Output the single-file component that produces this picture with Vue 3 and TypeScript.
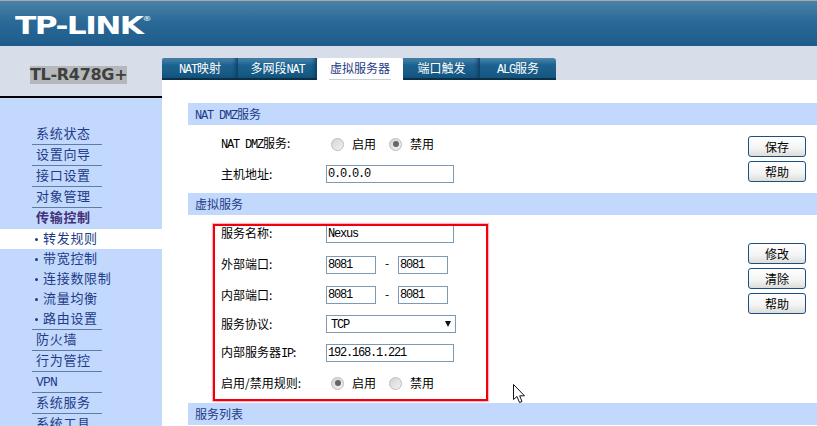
<script setup lang="ts">
const menuTop = ['系统状态', '设置向导', '接口设置', '对象管理']
const subs = ['转发规则', '带宽控制', '连接数限制', '流量均衡', '路由设置']
const menuBottom = ['防火墙', '行为管控', 'VPN', '系统服务', '系统工具']
const tabs = [
  { cjk: '映射', pre: 'NAT', post: '', w: 76 },
  { cjk: '多网段', pre: '', post: 'NAT', w: 79 },
  { cjk: '虚拟服务器', pre: '', post: '', w: 86, active: true },
  { cjk: '端口触发', pre: '', post: '', w: 77 },
  { cjk: '服务', pre: 'ALG', post: '', w: 76 },
]
</script>

<template>
  <div class="page">
    <header class="top">
      <div class="logo"><span class="logo-text">TP-LINK<span class="reg">®</span></span></div>
    </header>
    <div class="body">
      <aside class="side">
        <div class="model"><span class="model-name">TL-R478G+</span></div>
        <nav class="nav">
          <div v-for="m in menuTop" :key="m" class="item">{{ m }}</div>
          <div class="item group">传输控制</div>
          <div v-for="(s, i) in subs" :key="s" class="sub" :class="{ on: i === 0 }">
            <i class="dot"></i><span class="sub-text">{{ s }}</span>
          </div>
          <div v-for="m in menuBottom" :key="m" class="item">
            <span :class="{ latn: m === 'VPN' }">{{ m }}</span>
          </div>
        </nav>
      </aside>
      <main class="main">
        <div class="tabbar">
          <div
            v-for="t in tabs"
            :key="t.cjk"
            class="tab"
            :class="{ active: t.active }"
            :style="{ width: t.w + 'px' }"
          >
            <span class="inner"><span class="lat">{{ t.pre }}</span>{{ t.cjk }}<span class="lat">{{ t.post }}</span></span>
          </div>
        </div>
        <div class="content">
          <h2 class="bar"><span class="lat">NAT DMZ</span>服务</h2>
          <section class="sec sec1">
            <div class="form form1">
              <label class="lab"><span class="lat">NAT DMZ</span>服务:</label>
              <div class="ctl">
                <span class="radio"></span><span class="rt">启用</span>
                <span class="radio checked"></span><span class="rt">禁用</span>
              </div>
              <label class="lab">主机地址:</label>
              <div class="ctl"><input class="inp wide" value="0.0.0.0" /></div>
            </div>
            <div class="btns">
              <button class="btn">保存</button>
              <button class="btn">帮助</button>
            </div>
          </section>
          <h2 class="bar">虚拟服务</h2>
          <section class="sec sec2">
            <div class="form form2">
              <label class="lab">服务名称:</label>
              <div class="ctl"><input class="inp wide" value="Nexus" /></div>
              <label class="lab">外部端口:</label>
              <div class="ctl">
                <input class="inp port" value="8081" /><span class="dash">-</span><input class="inp port" value="8081" />
              </div>
              <label class="lab">内部端口:</label>
              <div class="ctl">
                <input class="inp port" value="8081" /><span class="dash">-</span><input class="inp port" value="8081" />
              </div>
              <label class="lab">服务协议:</label>
              <div class="ctl">
                <div class="select"><span class="lat">TCP</span><i class="arrow"></i></div>
              </div>
              <label class="lab">内部服务器<span class="lat">IP</span>:</label>
              <div class="ctl"><input class="inp wide" value="192.168.1.221" /></div>
              <label class="lab">启用/禁用规则:</label>
              <div class="ctl">
                <span class="radio checked"></span><span class="rt">启用</span>
                <span class="radio"></span><span class="rt">禁用</span>
              </div>
            </div>
            <div class="btns">
              <button class="btn">修改</button>
              <button class="btn">清除</button>
              <button class="btn">帮助</button>
            </div>
            <div class="redbox"></div>
            <svg class="cursor" width="14" height="20" viewBox="0 0 14 20">
              <path
                d="M1.5 0.5V15.5L5 12.5L7.5 18.5L10 17.5L7.7 11.8H12.5Z"
                fill="#fff"
                stroke="#10131c"
                stroke-width="1"
              />
            </svg>
          </section>
          <h2 class="bar">服务列表</h2>
        </div>
      </main>
    </div>
  </div>
</template>

<style>
html,
body {
  margin: 0;
  overflow: hidden;
  background: #fff;
}
</style>

<style scoped>
.page {
  width: 817px;
  height: 426px;
  overflow: hidden;
  font-family: "Noto Sans CJK SC", "Liberation Sans", sans-serif;
  font-size: 12px;
  color: #000;
}
.lat {
  font-family: "Liberation Mono", monospace;
  font-size: 12px;
  letter-spacing: -1.2px;
}
.top {
  height: 45px;
  border-top: 1px solid #a9a9a9;
  background: linear-gradient(#4a82a8, #2a6a98 45%, #1e5b8a);
}
.logo {
  padding: 10px 0 0 15px;
  line-height: 30px;
}
.logo-text {
  display: inline-block;
  transform: scaleX(1.3);
  transform-origin: left center;
  font-family: "DejaVu Sans", sans-serif;
  font-weight: 700;
  font-size: 24px;
  letter-spacing: -1.2px;
  color: #fff;
  white-space: nowrap;
  position: relative;
}
.reg {
  position: absolute;
  left: 100%;
  top: 0;
  font-size: 7px;
  line-height: 16px;
  letter-spacing: 0;
  color: #d5e2ec;
}
.body {
  display: flex;
  height: 380px;
}
.side {
  width: 162px;
  flex: none;
  background: #c3d8fd;
}
.model {
  height: 50px;
  border-bottom: 2px solid #000;
  background: #d7dee9;
  display: flex;
  align-items: center;
  padding-left: 30px;
}
.model-name {
  display: block;
  background: #b5b8bb;
  color: #3f3f3f;
  font-family: "DejaVu Sans", sans-serif;
  font-weight: 700;
  font-size: 16px;
  line-height: 18px;
  width: 97px;
  text-align: center;
  white-space: nowrap;
  letter-spacing: -0.3px;
  margin-top: 8px;
}
.nav {
  padding-top: 25px;
  color: #1d3b86;
  font-size: 13px;
  letter-spacing: 0.7px;
}
.item {
  width: 66px;
  height: 20px;
  line-height: 18px;
  margin-left: 32px;
  padding-left: 4px;
  border-top: 1px solid #5e7fa3;
  white-space: nowrap;
}
.item:first-child {
  border-top-color: transparent;
}
.group {
  height: 21px;
  font-weight: 700;
  color: #43307a;
}
.latn {
  font-family: "Liberation Mono", monospace;
  font-size: 13px;
  letter-spacing: -0.8px;
}
.sub {
  height: 20px;
  display: flex;
  align-items: center;
  padding-left: 35px;
  white-space: nowrap;
}
.sub-text {
  line-height: 16px;
  margin-bottom: 3px;
}
.sub.on {
  background: #fff;
}
.dot {
  width: 3px;
  height: 3px;
  border-radius: 50%;
  background: #1d3b86;
  margin: 0 5px 0 0;
}
.main {
  flex: 1;
  min-width: 0;
}
.tabbar {
  height: 34px;
  box-sizing: border-box;
  padding-top: 12px;
  background: #d7dee9;
  display: flex;
}
.tab {
  height: 22px;
  box-sizing: border-box;
  background: linear-gradient(#4c87ad, #1d6390 35%, #145580);
  border-bottom: 2px solid #0a3048;
  box-shadow: inset -4px 0 4px -2px #0f3b5c;
  color: #fff;
  text-align: center;
  line-height: 19px;
  white-space: nowrap;
}
.tab:nth-child(5) {
  box-shadow: none;
  border-top-right-radius: 3px;
}
.tab:first-child {
  border-top-left-radius: 2px;
}
.tab.active {
  background: #fff;
  border-bottom: 0;
  box-shadow: none;
  color: #1d3b86;
  border-radius: 3px 3px 0 0;
}
.tab .inner {
  display: inline-block;
  height: 21px;
  box-sizing: border-box;
}
.tab.active .inner {
  border-bottom: 1px solid #c2cfd3;
  padding: 0 1px;
  height: 22px;
}
.content {
  padding-top: 23px;
  padding-left: 26px;
  background: #fff;
  height: 346px;
  box-sizing: border-box;
}
.bar {
  margin: 0;
  height: 22px;
  line-height: 22px;
  padding-left: 7px;
  background: #c3d8fd;
  color: #1d3b86;
  font-size: 12px;
  font-weight: 400;
}
.sec {
  position: relative;
  display: flex;
  justify-content: space-between;
}
.sec1 {
  height: 68px;
}
.sec2 {
  height: 188px;
}
.form {
  display: grid;
  grid-template-columns: 105px auto;
  align-items: center;
  margin-left: 33px;
  align-content: start;
}
.form1 {
  padding-top: 4px;
  grid-template-rows: 30px 30px;
}
.form2 {
  padding-top: 3px;
  grid-template-rows: 31px 31px 30px 28px 30px 30px;
}
.lab {
  white-space: nowrap;
  padding-bottom: 2px;
}
.ctl {
  display: flex;
  align-items: center;
}
.inp {
  box-sizing: border-box;
  height: 18px;
  border: 1px solid #7d9ab5;
  padding: 0 0 0 1px;
  margin: 0;
  font-family: "Liberation Mono", monospace;
  font-size: 12px;
  letter-spacing: -1.2px;
  color: #000;
  background: #fff;
  outline: none;
}
.wide {
  width: 128px;
}
.port {
  width: 50px;
}
.dash {
  width: 22px;
  text-align: center;
  padding-bottom: 4px;
}
.select {
  box-sizing: border-box;
  width: 130px;
  height: 18px;
  border: 1px solid #7d9ab5;
  padding-left: 4px;
  line-height: 14px;
  position: relative;
}
.arrow {
  position: absolute;
  right: 4px;
  top: 5px;
  border-left: 3px solid transparent;
  border-right: 3px solid transparent;
  border-top: 6px solid #111;
}
.radio {
  box-sizing: border-box;
  width: 13px;
  height: 13px;
  margin-left: 5px;
  border-radius: 50%;
  border: 1px solid #bcbcbc;
  background: linear-gradient(135deg, #d4d4d4, #f2f2f2);
  position: relative;
  flex: none;
}
.radio.checked::after {
  content: "";
  position: absolute;
  left: 2.5px;
  top: 2.5px;
  width: 6px;
  height: 6px;
  border-radius: 50%;
  background: #666;
}
.rt {
  margin-left: 8px;
  width: 32px;
  padding-bottom: 1px;
}
.btns {
  display: flex;
  flex-direction: column;
  gap: 4px;
  margin-right: 11px;
  padding-top: 11px;
}
.sec2 .btns {
  padding-top: 28px;
}
.btn {
  box-sizing: border-box;
  width: 58px;
  height: 21px;
  padding: 0;
  border: 1px solid #1c5082;
  border-radius: 3px;
  background: linear-gradient(#fff, #f3f3f3 60%, #dcdcd8);
  font-family: "Noto Sans CJK SC", sans-serif;
  font-size: 12px;
  line-height: 18px;
  color: #000;
}
.redbox {
  position: absolute;
  left: 25px;
  top: 9px;
  width: 275px;
  height: 177px;
  box-sizing: border-box;
  border: 2px solid #f0000e;
  box-shadow: 0 0 1px 1px rgba(255, 90, 100, 0.45);
  pointer-events: none;
}
.cursor {
  position: absolute;
  left: 324px;
  top: 169px;
}
</style>
